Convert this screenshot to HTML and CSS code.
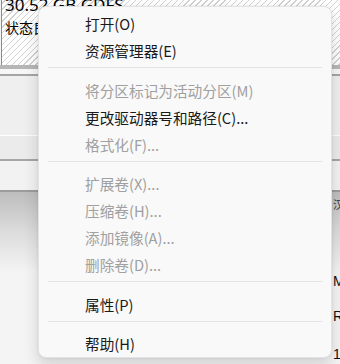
FILE: index.html
```html
<!DOCTYPE html>
<html lang="zh-CN">
<head>
<meta charset="utf-8">
<title>Disk menu</title>
<link rel="stylesheet" href="styles.css">
</head>
<body>
<div class="screen">
  <div class="volume">
    <div class="vol-text">
      <div class="vol-line vol-size">30.52 GB GDFS</div>
      <div class="vol-line vol-status">状态良好 (主分区)</div>
    </div>
  </div>
  <div class="band-dark"></div>
  <div class="band-light"></div>
  <div class="band-line"></div>
  <div class="pane-a"></div>
  <div class="pane-hl"></div>
  <div class="pane-b"></div>
  <div class="band-line"></div>
  <div class="pane-c"></div>
  <div class="band-line2"></div>
  <div class="lower">
    <div class="lower-fill"></div>
    <div class="edge-col">
      <div class="edge-glyph">汉</div>
      <div class="edge-m">M</div>
      <div class="edge-r">Re</div>
      <div class="edge-n">19</div>
    </div>
  </div>

  <div class="menu">
    <div class="item">打开(O)</div>
    <div class="item">资源管理器(E)</div>
    <div class="sep"></div>
    <div class="item disabled">将分区标记为活动分区(M)</div>
    <div class="item">更改驱动器号和路径(C)...</div>
    <div class="item disabled">格式化(F)...</div>
    <div class="sep"></div>
    <div class="item disabled">扩展卷(X)...</div>
    <div class="item disabled">压缩卷(H)...</div>
    <div class="item disabled">添加镜像(A)...</div>
    <div class="item disabled">删除卷(D)...</div>
    <div class="sep"></div>
    <div class="item">属性(P)</div>
    <div class="sep"></div>
    <div class="item">帮助(H)</div>
  </div>
</div>
</body>
</html>
```

FILE: styles.css
```css
html, body {
  margin: 0;
  padding: 0;
}
body {
  width: 340px;
  height: 364px;
  overflow: hidden;
  background: #f4f4f4;
  font-family: "Noto Sans CJK SC", "Noto Sans", sans-serif;
}
.screen {
  position: relative;
  width: 340px;
  height: 364px;
  overflow: hidden;
}
.volume {
  height: 65px;
  margin-left: 1px;
  border-left: 1px solid #8a8a8a;
  background-color: #ffffff;
  background-image: repeating-linear-gradient(135deg, #ffffff 0px, #ffffff 2px, #d2d2d2 2px, #d2d2d2 3px, #ffffff 3px, #ffffff 4.2px);
  overflow: hidden;
}
.vol-text {
  margin-top: -7px;
  padding-left: 3px;
  color: #000;
  font-family: "Noto Sans", "Noto Sans CJK SC", sans-serif;
}
.vol-line {
  height: 23px;
  line-height: 23px;
  white-space: nowrap;
}
.vol-size {
  font-size: 17px;
}
.vol-status {
  width: 34px;
  overflow: hidden;
  font-size: 14px;
}
.band-dark {
  height: 4px;
  background: #b6b6b6;
}
.band-light {
  height: 5px;
  background: #f7f7f7;
}
.band-line {
  height: 2px;
  background: #a5a5a5;
}
.pane-a {
  height: 59px;
  background: #efefef;
}
.pane-hl {
  height: 1px;
  background: #ffffff;
}
.pane-b {
  height: 23px;
  background: #ebebeb;
}
.pane-c {
  height: 29px;
  background: #f2f2f2;
}
.band-line2 {
  height: 2px;
  background: #9c9c9c;
}
.lower {
  display: flex;
  height: 171px;
  background: linear-gradient(#bdbdbd 0px, #dcdcdc 40px, #f4f4f4 80px, #f4f4f4 100%);
}
.lower-fill {
  flex: 1;
}
.edge-col {
  width: 7px;
  overflow: hidden;
  font-family: "Liberation Sans", sans-serif;
  font-size: 14px;
  color: #111;
}
.edge-glyph {
  margin-top: 4px;
  height: 16px;
  line-height: 16px;
  font-size: 11px;
  color: #333;
  font-family: "Noto Sans CJK SC", sans-serif;
}
.edge-m {
  margin-top: 61px;
  height: 16px;
  line-height: 16px;
}
.edge-r {
  margin-top: 19px;
  height: 16px;
  line-height: 16px;
}
.edge-n {
  margin-top: 22px;
  height: 16px;
  line-height: 16px;
}

.menu {
  position: absolute;
  left: 38px;
  top: 6px;
  width: 292px;
  padding: 3px 0 0 0;
  background: #f9f9f9;
  border: 1px solid #e3e3e3;
  border-radius: 8px;
  box-shadow: 0 8px 16px rgba(0, 0, 0, 0.14), 0 0 3px rgba(0, 0, 0, 0.08);
}
.item {
  height: 27px;
  line-height: 27px;
  padding-left: 46px;
  font-size: 14.67px;
  color: #1a1a1a;
  white-space: nowrap;
}
.item.disabled {
  color: #a0a0a0;
}
.sep {
  height: 1px;
  margin: 3px 9px 8.5px 9px;
  background: #e3e3e3;
}
```
